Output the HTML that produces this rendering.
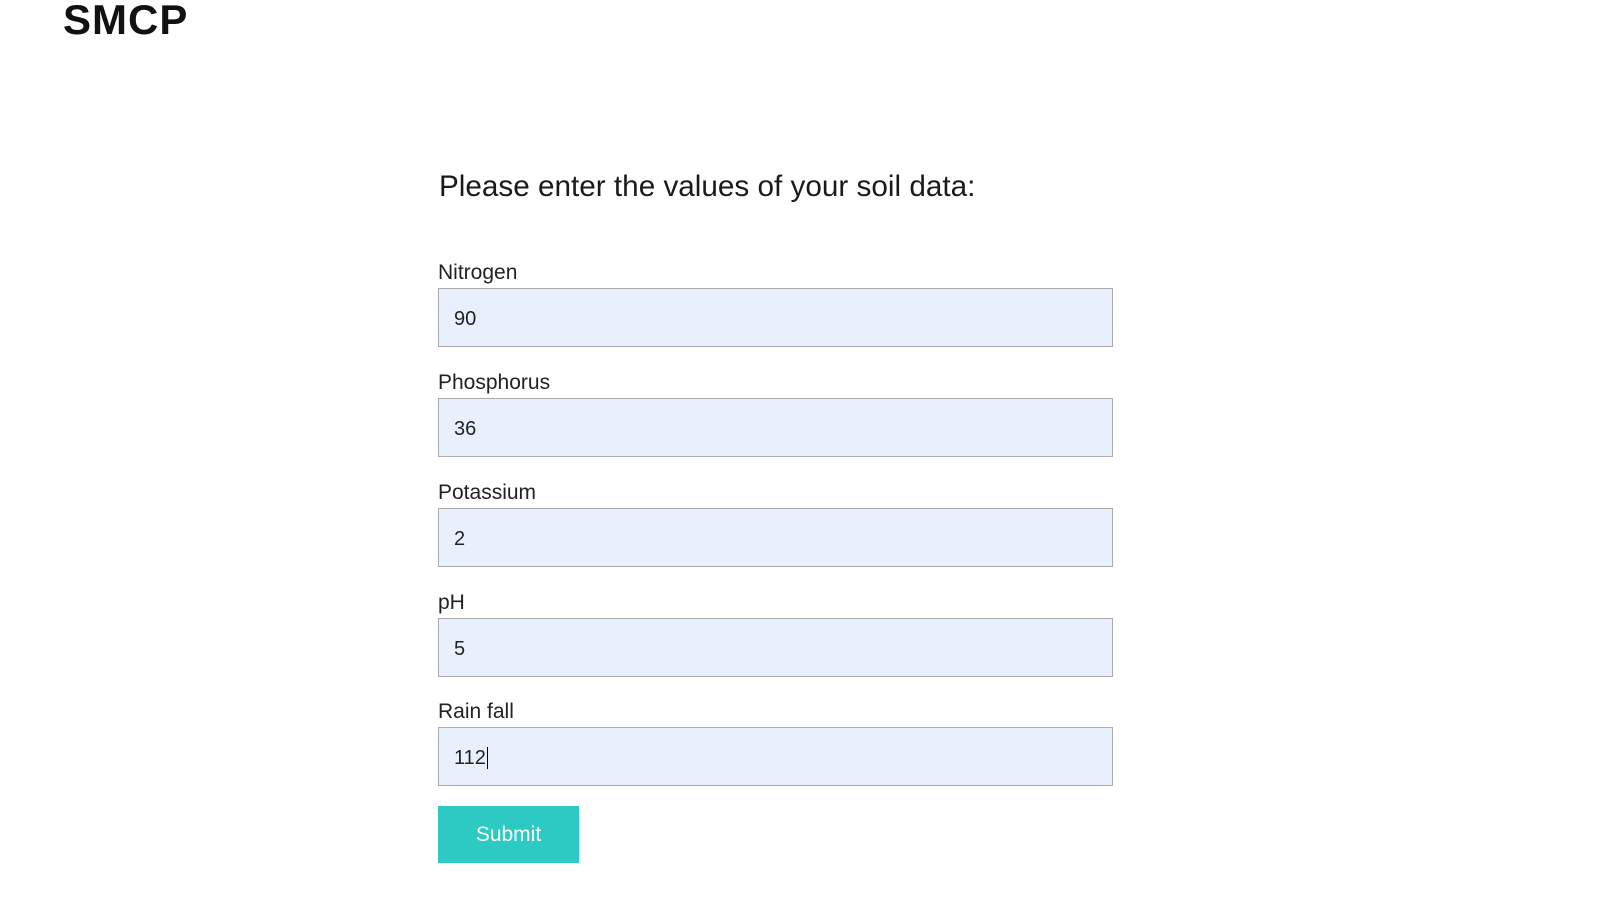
<!DOCTYPE html>
<html><head><style>
body{margin:0;width:1607px;height:907px;background:#fff;font-family:"Liberation Sans",sans-serif;color:#222;position:relative;overflow:hidden}
.t{position:absolute;left:63px;top:-4px;font-size:42px;font-weight:bold;color:#111;letter-spacing:1px}
h2{position:absolute;left:439px;top:170px;margin:0;font-weight:normal;font-size:29.7px;color:#1a1a1a}
.l{position:absolute;left:438px;font-size:21px;color:#222}
.i{position:absolute;left:438px;width:675px;height:59px;background:#e8f0fe;border:1px solid #aaa;font-size:20px;line-height:60px;box-sizing:border-box;padding-left:15px;color:#222}
.b{position:absolute;left:438px;top:806px;width:141px;height:57px;background:#2ccac3;color:#fff;font-size:21px;text-align:center;line-height:57px}
</style></head><body>
<div class="t">SMCP</div>
<h2>Please enter the values of your soil data:</h2>
<div class="l" style="top:261px">Nitrogen</div><div class="i" style="top:288px">90</div>
<div class="l" style="top:371px">Phosphorus</div><div class="i" style="top:398px">36</div>
<div class="l" style="top:481px">Potassium</div><div class="i" style="top:508px">2</div>
<div class="l" style="top:591px">pH</div><div class="i" style="top:618px">5</div>
<div class="l" style="top:700px">Rain fall</div><div class="i" style="top:727px">112<span style="border-left:1px solid #000;margin-left:1px"></span></div>
<div class="b">Submit</div>
</body></html>
